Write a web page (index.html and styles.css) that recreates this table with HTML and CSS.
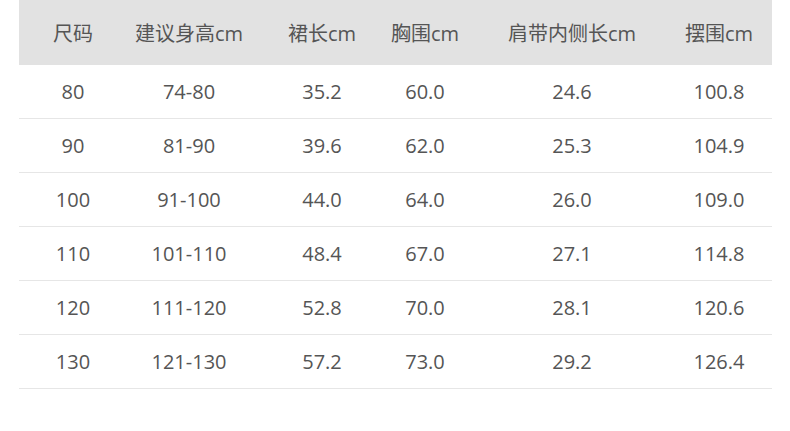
FILE: index.html
```html
<!DOCTYPE html>
<html lang="zh">
<head>
<meta charset="utf-8">
<link rel="stylesheet" href="styles.css">
</head>
<body>
<div class="table">
  <div class="row head">
    <div class="c">尺码</div><div class="c">建议身高cm</div><div class="c">裙长cm</div><div class="c">胸围cm</div><div class="c">肩带内侧长cm</div><div class="c last">摆围cm</div>
  </div>
  <div class="row">
    <div class="c">80</div><div class="c">74-80</div><div class="c">35.2</div><div class="c">60.0</div><div class="c">24.6</div><div class="c last">100.8</div>
  </div>
  <div class="row">
    <div class="c">90</div><div class="c">81-90</div><div class="c">39.6</div><div class="c">62.0</div><div class="c">25.3</div><div class="c last">104.9</div>
  </div>
  <div class="row">
    <div class="c">100</div><div class="c">91-100</div><div class="c">44.0</div><div class="c">64.0</div><div class="c">26.0</div><div class="c last">109.0</div>
  </div>
  <div class="row">
    <div class="c">110</div><div class="c">101-110</div><div class="c">48.4</div><div class="c">67.0</div><div class="c">27.1</div><div class="c last">114.8</div>
  </div>
  <div class="row">
    <div class="c">120</div><div class="c">111-120</div><div class="c">52.8</div><div class="c">70.0</div><div class="c">28.1</div><div class="c last">120.6</div>
  </div>
  <div class="row">
    <div class="c">130</div><div class="c">121-130</div><div class="c">57.2</div><div class="c">73.0</div><div class="c">29.2</div><div class="c last">126.4</div>
  </div>
</div>
</body>
</html>
```
FILE: styles.css
```css
html, body {
  margin: 0;
  padding: 0;
  background: #ffffff;
}
body {
  font-family: "Open Sans", "Noto Sans CJK SC", sans-serif;
  color: #555555;
  font-size: 20px;
}
.table {
  margin-left: 19px;
  width: 753px;
}
.row {
  display: grid;
  grid-template-columns: 108px 124px 142px 64px 230px 85px;
  height: 53px;
  align-items: center;
  border-bottom: 1px solid #e6e6e6;
}
.row.head {
  height: 65px;
  background: #e2e2e2;
  border-bottom: none;
}
.c {
  text-align: center;
  white-space: nowrap;
  display: flex;
  justify-content: center;
}
.c.last {
  padding-right: 21px;
}
```
